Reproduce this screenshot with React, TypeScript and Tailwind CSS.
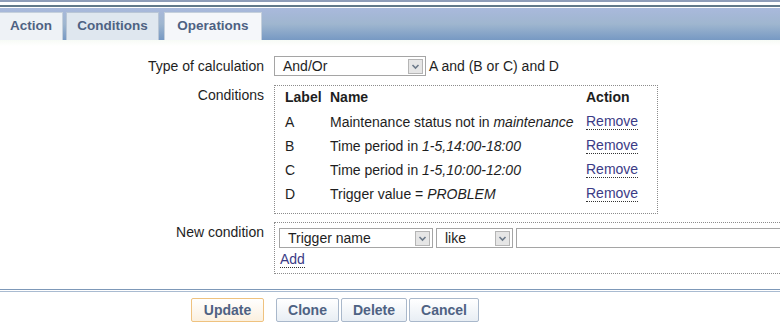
import { ReactNode } from "react";

type Condition = {
  label: string;
  name: string;
  value: string;
};

const conditions: Condition[] = [
  { label: "A", name: "Maintenance status not in ", value: "maintenance" },
  { label: "B", name: "Time period in ", value: "1-5,14:00-18:00" },
  { label: "C", name: "Time period in ", value: "1-5,10:00-12:00" },
  { label: "D", name: "Trigger value = ", value: "PROBLEM" },
];

function DropArrow() {
  return (
    <span className="flex h-[15px] w-[15px] items-center justify-center border border-[#b5b5b5] bg-[#e6e6e6]">
      <svg width="9" height="7" viewBox="0 0 9 7">
        <path d="M1.5 2 L4.5 5 L7.5 2" fill="none" stroke="#6d7a8a" strokeWidth="1.6" />
      </svg>
    </span>
  );
}

function FakeSelect({ value, width }: { value: string; width: string }) {
  return (
    <div
      className={`flex h-[20px] ${width} items-center justify-between border border-[#a5a5a5] bg-white pl-[8px] pr-[2px]`}
    >
      <span className="leading-none">{value}</span>
      <DropArrow />
    </div>
  );
}

function Row({ label, children }: { label: string; children: ReactNode }) {
  return (
    <div className="flex">
      <div className="w-[264px] shrink-0 text-right">{label}</div>
      <div className="ml-[10px] min-w-0 flex-1">{children}</div>
    </div>
  );
}

function Tab({ label, active, extra }: { label: string; active?: boolean; extra: string }) {
  return (
    <div
      className={[
        "flex h-[28px] items-center justify-center border border-b-0 text-[13.5px] font-bold text-[#4e6283]",
        active ? "bg-[#dfe7ef] border-[#b9c6d6]" : "bg-[#eef2f6] border-[#c5d0dc]",
        extra,
      ].join(" ")}
    >
      {label}
    </div>
  );
}

export default function App() {
  return (
    <div
      className="h-[322px] w-[780px] overflow-hidden bg-white text-[14px] text-[#1e1e1e]"
      style={{ fontFamily: '"Liberation Sans", Arial, sans-serif' }}
    >
      {/* top lines */}
      <div className="h-[2px] bg-[#8e9db9]" />
      <div className="h-[3px] bg-white" />
      <div className="h-[2px] bg-[#62798a]" />
      <div className="h-[1px] bg-white" />

      {/* tab bar */}
      <div className="flex h-[32px] items-end gap-[3px] bg-gradient-to-b from-[#a9b9dc] via-[#9fb6cf] to-[#7799c3]">
        <Tab label="Action" extra="w-[63px] border-l-0" />
        <Tab label="Conditions" active extra="w-[93px]" />
        <Tab label="Operations" extra="w-[98px] ml-[2px] bg-[#f5f7fa]" />
      </div>

      {/* form body */}
      <div className="flex h-[249px] flex-col gap-[8px] bg-gradient-to-b from-[#f7fbf6] to-white to-[6px] pt-[16px]">
        <Row label="Type of calculation">
          <div className="flex h-[20px] items-center">
            <FakeSelect value="And/Or" width="w-[152px]" />
            <span className="ml-[3px]">A and (B or C) and D</span>
          </div>
        </Row>

        <Row label="Conditions">
          <div className="w-[384px] border border-dotted border-[#8c8c8c] pb-[7px] pl-[10px]">
            <div className="mb-[2px] flex h-[22px] items-center font-bold">
              <span className="w-[45px]">Label</span>
              <span className="w-[256px]">Name</span>
              <span>Action</span>
            </div>
            {conditions.map((c) => (
              <div key={c.label} className="flex h-[24px] items-center">
                <span className="w-[45px]">{c.label}</span>
                <span className="w-[256px] whitespace-nowrap">
                  {c.name}
                  <i>{c.value}</i>
                </span>
                <a className="border-b border-dotted border-[#333] leading-[15px] text-[#3b3b86]">
                  Remove
                </a>
              </div>
            ))}
          </div>
        </Row>

        <Row label="New condition">
          <div className="h-[52px] border border-r-0 border-dotted border-[#8c8c8c] pl-[4px] pt-[5px]">
            <div className="flex gap-[3px]">
              <FakeSelect value="Trigger name" width="w-[154px]" />
              <FakeSelect value="like" width="w-[77px]" />
              <div className="h-[20px] flex-1 border border-r-0 border-[#a5a5a5] bg-white" />
            </div>
            <a className="ml-[1px] mt-[4px] inline-block border-b border-dotted border-[#333] leading-[15px] text-[#3b3b86]">
              Add
            </a>
          </div>
        </Row>
      </div>

      {/* footer */}
      <div className="h-[1px] bg-[#7d98b8]" />
      <div className="h-[1px] bg-white" />
      <div className="h-[1px] bg-[#a9bbd1]" />
      <div className="flex pl-[191px] pt-[6px] text-[14px] font-bold text-[#4e6283]">
        <button className="h-[24px] w-[73px] rounded-[2px] border border-[#efc27f] bg-gradient-to-b from-white to-[#fbf0df]">
          Update
        </button>
        <button className="ml-[12px] h-[24px] w-[63px] rounded-[2px] border border-[#a9b8cb] bg-gradient-to-b from-white to-[#e8eef4]">
          Clone
        </button>
        <button className="ml-[2px] h-[24px] w-[66px] rounded-[2px] border border-[#a9b8cb] bg-gradient-to-b from-white to-[#e8eef4]">
          Delete
        </button>
        <button className="ml-[2px] h-[24px] w-[70px] rounded-[2px] border border-[#a9b8cb] bg-gradient-to-b from-white to-[#e8eef4]">
          Cancel
        </button>
      </div>
    </div>
  );
}
